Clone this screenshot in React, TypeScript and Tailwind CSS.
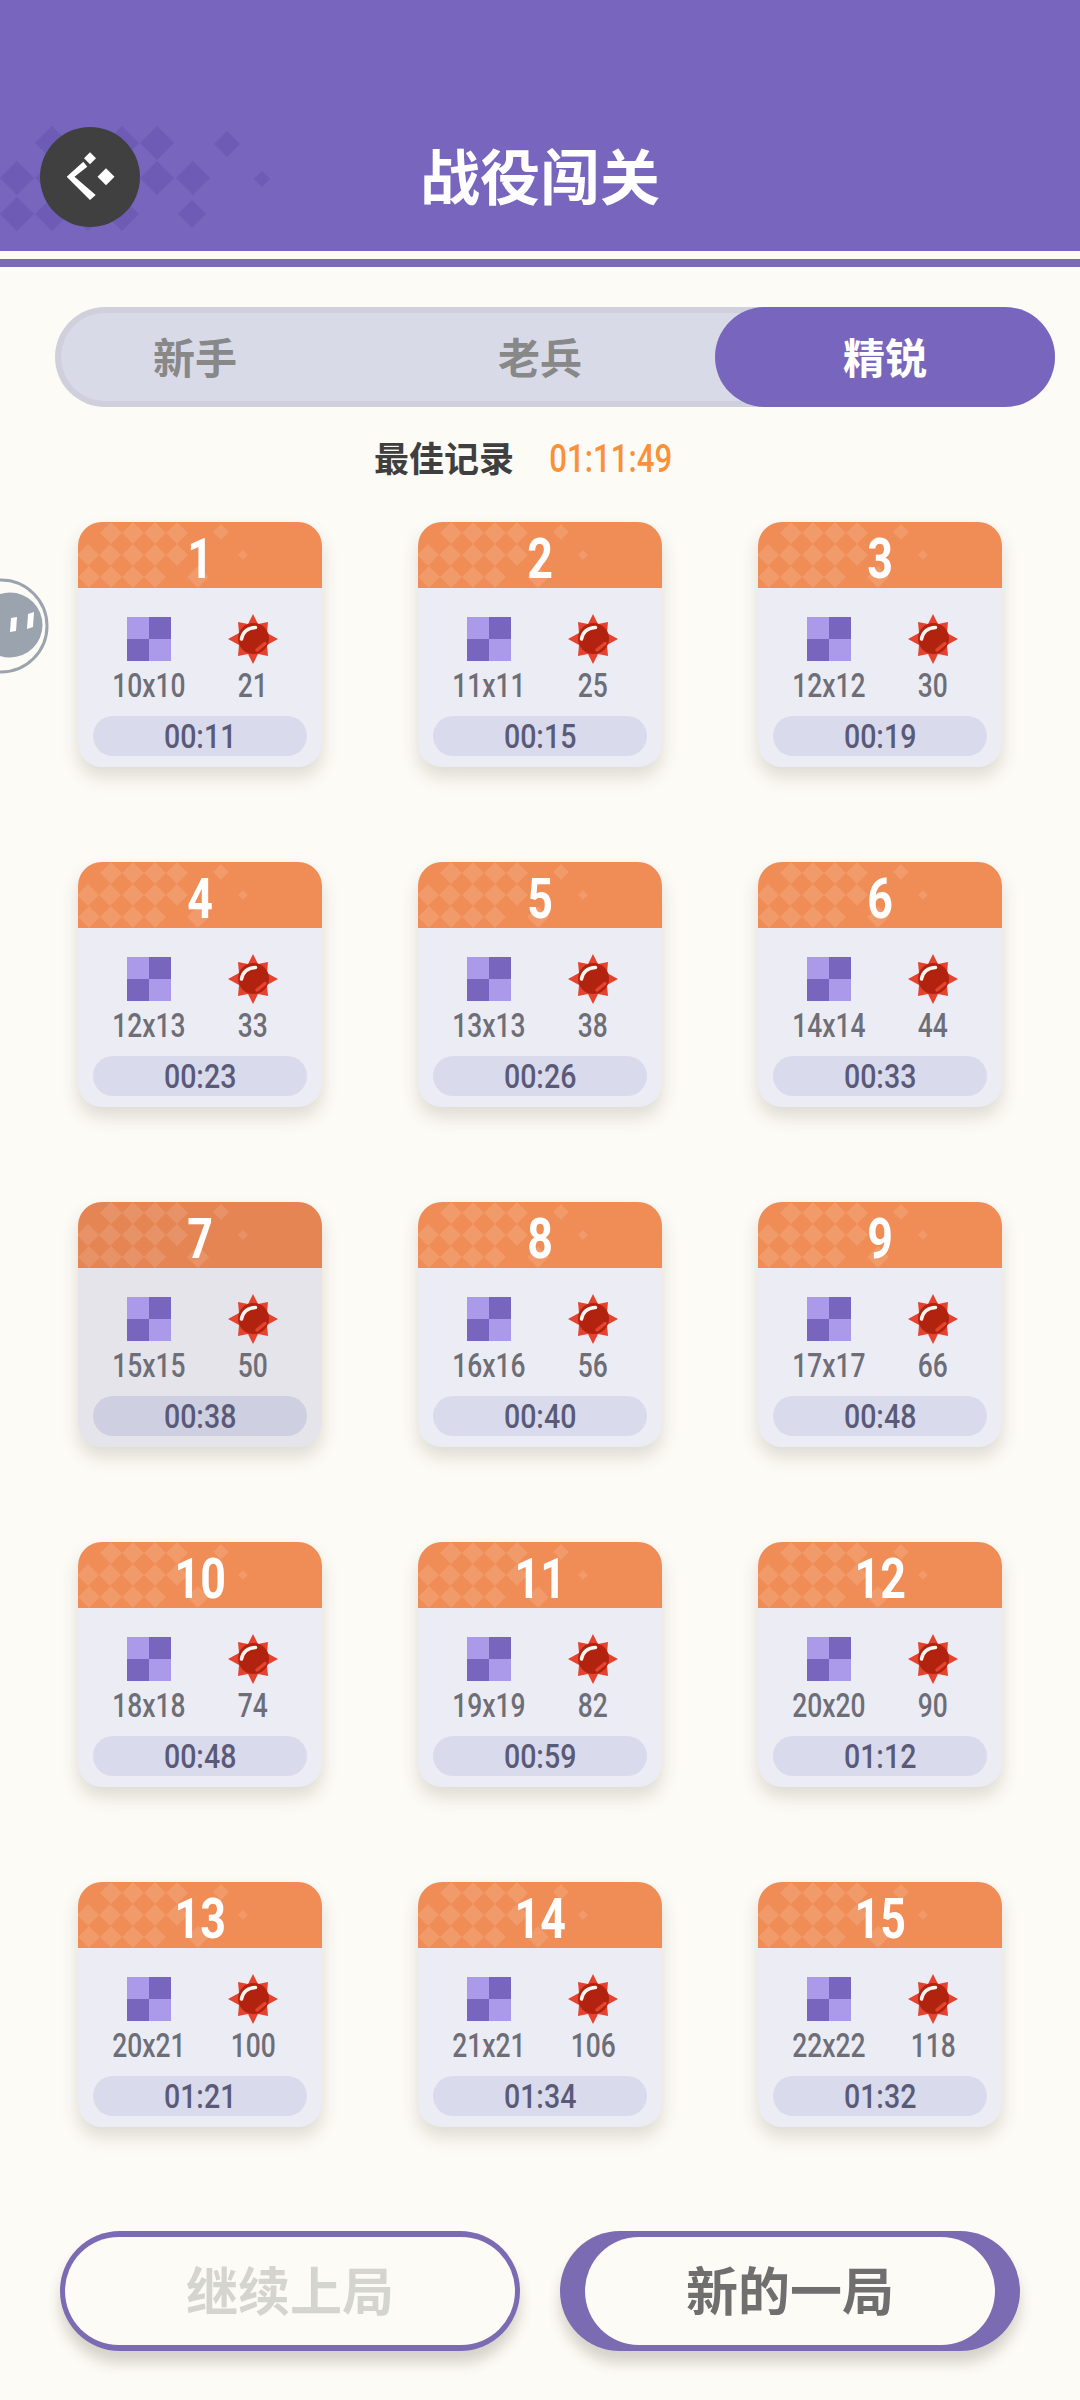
const LEVELS = [
  { id: 1, size: "10x10", mines: 21, time: "00:11" },
  { id: 2, size: "11x11", mines: 25, time: "00:15" },
  { id: 3, size: "12x12", mines: 30, time: "00:19" },
  { id: 4, size: "12x13", mines: 33, time: "00:23" },
  { id: 5, size: "13x13", mines: 38, time: "00:26" },
  { id: 6, size: "14x14", mines: 44, time: "00:33" },
  { id: 7, size: "15x15", mines: 50, time: "00:38", pressed: true },
  { id: 8, size: "16x16", mines: 56, time: "00:40" },
  { id: 9, size: "17x17", mines: 66, time: "00:48" },
  { id: 10, size: "18x18", mines: 74, time: "00:48" },
  { id: 11, size: "19x19", mines: 82, time: "00:59" },
  { id: 12, size: "20x20", mines: 90, time: "01:12" },
  { id: 13, size: "20x21", mines: 100, time: "01:21" },
  { id: 14, size: "21x21", mines: 106, time: "01:34" },
  { id: 15, size: "22x22", mines: 118, time: "01:32" },
];

// [cx, cy, half-diagonal] of the faint diamonds
const HEADER_DIAMONDS = [
  [52, 143, 17], [122, 143, 17], [157, 143, 17], [227, 144, 13],
  [17, 178, 17], [52, 178, 17], [88, 178, 17], [157, 178, 17], [193, 178, 17], [262, 179, 8],
  [17, 214, 17], [52, 214, 17], [88, 214, 17], [122, 214, 17], [192, 214, 14],
];

const CARD_DIAMONDS = [
  [33, 11, 11], [55, 11, 11], [77, 11, 11], [99, 11, 11], [143, 10, 8],
  [10, 33, 11], [32, 33, 11], [55, 33, 11], [77, 33, 11], [99, 33, 11], [165, 33, 5],
  [11, 55, 11], [33, 55, 11], [55, 55, 11], [77, 55, 11], [120, 55, 11],
];

function Diamonds({ items, fill, width, height }: { items: number[][]; fill: string; width: number; height: number }) {
  return (
    <svg width={width} height={height} viewBox={`0 0 ${width} ${height}`} className="absolute left-0 top-0">
      {items.map(([x, y, r]) => (
        <polygon key={`${x}-${y}`} points={`${x},${y - r} ${x + r},${y} ${x},${y + r} ${x - r},${y}`} fill={fill} />
      ))}
    </svg>
  );
}

function BoardIcon() {
  return (
    <div className="grid h-[44px] w-[44px] grid-cols-2 grid-rows-2">
      <div className="bg-[#AB9AE9]" />
      <div className="bg-[#7865BD]" />
      <div className="bg-[#7865BD]" />
      <div className="bg-[#AB9AE9]" />
    </div>
  );
}

function MineIcon() {
  return (
    <svg width="50" height="50" viewBox="0 0 50 50">
      <polygon
        fill="#E5432F"
        points="25,0 30,10 40,8 39,19 50,25 39,31 40,42 30,40 25,50 20,40 10,42 11,31 0,25 11,19 10,8 20,10"
      />
      <circle cx="25.5" cy="24.5" r="15.5" fill="#B1220F" />
      <path d="M13.5 25 C14.5 18 20 13.5 27.5 13.5" fill="none" stroke="#FFF6F0" strokeWidth="3.5" strokeLinecap="round" />
      <path d="M29 36 L37 29.5" fill="none" stroke="#E5432F" strokeWidth="3.5" strokeLinecap="round" />
    </svg>
  );
}

function LevelCard({ level }: { level: (typeof LEVELS)[number] }) {
  const pressed = !!level.pressed;
  return (
    <div
      className={`h-[245px] w-[244px] overflow-hidden rounded-[24px] shadow-[0_10px_18px_rgba(60,50,30,0.16)] ${
        pressed ? "bg-[#E4E4EA]" : "bg-[#ECEDF4]"
      }`}
    >
      <div
        className={`relative flex h-[66px] items-start justify-center ${
          pressed ? "bg-[#E58553]" : "bg-[#F08C56]"
        }`}
      >
        <Diamonds items={CARD_DIAMONDS} fill="rgba(255,255,255,0.12)" width={244} height={66} />
        <span className="relative mt-[8px] inline-block scale-x-[0.8] font-['Roboto',sans-serif] text-[56px] leading-[58px] font-bold text-white">
          {level.id}
        </span>
      </div>

      <div className="flex pt-[26px] pl-[19px]">
        <div className="flex w-[104px] flex-col items-center">
          <div className="flex h-[50px] items-center">
            <BoardIcon />
          </div>
          <span className="mt-[5px] inline-block h-[34px] scale-x-[0.8] font-['Roboto',sans-serif] text-[33px] leading-[34px] font-medium whitespace-nowrap text-[#6E6E78]">
            {level.size}
          </span>
        </div>
        <div className="flex w-[104px] flex-col items-center">
          <MineIcon />
          <span className="mt-[5px] inline-block h-[34px] scale-x-[0.8] font-['Roboto',sans-serif] text-[33px] leading-[34px] font-medium whitespace-nowrap text-[#6E6E78]">
            {level.mines}
          </span>
        </div>
      </div>

      <div
        className={`mx-[15px] mt-[13px] flex h-[40px] items-center justify-center rounded-full pt-[1px] ${
          pressed ? "bg-[#CECFE0]" : "bg-[#D9DBEC]"
        }`}
      >
        <span className="inline-block scale-x-[0.84] font-['Roboto',sans-serif] text-[34px] leading-[39px] font-medium text-[#5A5A78]">
          {level.time}
        </span>
      </div>
    </div>
  );
}

export default function App() {
  return (
    <div className="relative h-[2400px] w-[1080px] overflow-hidden bg-[#FDFBF6] font-['Noto_Sans_CJK_SC',sans-serif]">
      {/* Header */}
      <div className="relative flex h-[251px] items-end justify-center bg-[#7865BD] pb-[39px]">
        <Diamonds items={HEADER_DIAMONDS} fill="#6E5BB5" width={300} height={251} />
        <button className="absolute top-[127px] left-[40px] h-[100px] w-[100px] rounded-full bg-[#404040]">
          <svg width="100" height="100" viewBox="0 0 100 100">
            <polygon points="26.7,49.7 43.3,34.7 47.3,39.7 34.5,49.7 55.7,68 50,73" fill="#fff" />
            <polygon points="50,25.3 56,31.3 50,37.3 44,31.3" fill="#fff" />
            <polygon points="66,41.2 74.5,49.7 66,58.2 57.5,49.7" fill="#fff" />
          </svg>
        </button>
        <h1 className="relative text-[60px] leading-[76px] font-bold text-white">战役闯关</h1>
      </div>
      <div className="mt-[8px] h-[8px] bg-[#7B6BB3]" />

      {/* Difficulty tabs */}
      <div className="mx-[55px] mt-[40px] flex h-[100px] w-[1000px] rounded-full border-[6px] border-r-0 border-[#CFD0DC] bg-[#D9DAE8]">
        <div className="flex w-[304px] items-center justify-center pr-[36px] pb-[4px] text-[42px] font-bold text-[#888888]">
          新手
        </div>
        <div className="flex w-[350px] items-center justify-center pb-[4px] text-[42px] font-bold text-[#888888]">老兵</div>
        <div className="-my-[6px] flex w-[340px] items-center justify-center rounded-full bg-[#7865BD] pb-[4px] text-[42px] font-bold text-white">
          精锐
        </div>
      </div>

      {/* Best record */}
      <div className="mt-[32px] flex h-[40px] items-center pl-[374px]">
        <span className="-mt-[5px] w-[138px] text-[35px] leading-none font-bold whitespace-nowrap text-[#3F3F3F]">最佳记录</span>
        <span className="ml-[37px] flex w-[123px] justify-center">
          <span className="inline-block scale-x-[0.8] font-['Roboto',sans-serif] text-[39px] leading-[40px] font-medium whitespace-nowrap text-[#FB9136]">
            01:11:49
          </span>
        </span>
      </div>

      {/* Levels */}
      <div className="mt-[43px] grid grid-cols-[repeat(3,244px)] gap-x-[96px] gap-y-[95px] pl-[78px]">
        {LEVELS.map((level) => (
          <LevelCard key={level.id} level={level} />
        ))}
      </div>

      {/* Actions */}
      <div className="mt-[104px] flex gap-[40px] pl-[60px]">
        <button className="flex h-[120px] w-[460px] items-center justify-center rounded-full bg-[#7B6BB3] px-[5px] shadow-[0_12px_14px_rgba(60,50,30,0.2)]">
          <span className="flex h-[108px] w-full items-center justify-center rounded-full bg-[#FDFBF6] pb-[5px] text-[52px] font-bold text-[#D5D5D0]">
            继续上局
          </span>
        </button>
        <button className="flex h-[120px] w-[460px] items-center justify-center rounded-full bg-[#7B6BB3] px-[25px] shadow-[0_12px_14px_rgba(60,50,30,0.2)]">
          <span className="flex h-[108px] w-full items-center justify-center rounded-full bg-[#FDFBF6] pb-[5px] text-[52px] font-bold text-[#6F6F6F]">
            新的一局
          </span>
        </button>
      </div>

      {/* Floating assistant ball */}
      <svg width="50" height="98" viewBox="0 0 50 98" className="absolute top-[577px] left-0">
        <circle cx="1" cy="49" r="46" fill="#FDFBF6" stroke="#9BA3AF" strokeWidth="3" />
        <circle cx="10" cy="48" r="32.5" fill="#9BA3AF" />
        <polygon points="11,41 17,40 16,54 10,55" fill="#fff" />
        <polygon points="28,37 34,35 33,50 27,52" fill="#fff" />
      </svg>
    </div>
  );
}
